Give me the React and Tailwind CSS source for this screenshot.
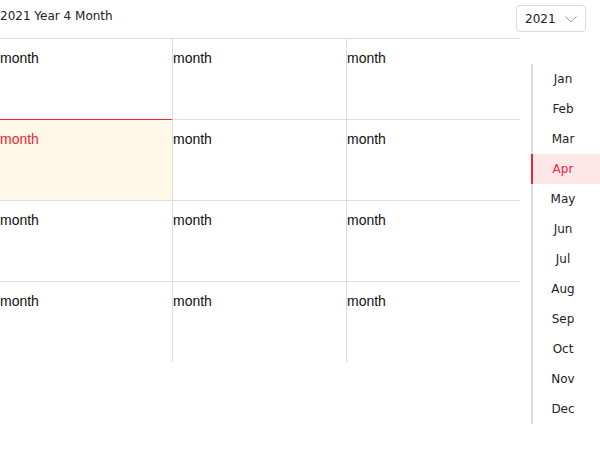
import React from 'react';

const MONTHS = ['Jan', 'Feb', 'Mar', 'Apr', 'May', 'Jun', 'Jul', 'Aug', 'Sep', 'Oct', 'Nov', 'Dec'];
const ACTIVE = 3;

function Chevron() {
  return (
    <svg width="14" height="12" viewBox="0 0 14 12" fill="none" className="ml-[8px]">
      <path d="M1.5 3.5 L7 9 L12.5 3.5" stroke="#9ca3af" strokeWidth="1" />
    </svg>
  );
}

export default function App() {
  const dv = { fontFamily: '"DejaVu Sans", sans-serif' };
  const lib = { fontFamily: '"Liberation Sans", Arial, sans-serif' };
  return (
    <div className="w-[600px] h-[460px] bg-white overflow-hidden" style={dv}>
      <div className="flex justify-between items-start h-[38px]">
        <div className="mt-[8px] text-[12px] leading-4 text-[#222]">2021 Year 4 Month</div>
        <div className="mt-[5px] mr-[14px] h-[27px] w-[70px] border border-[#d9d9d9] rounded-[4px] flex items-center pl-[8px] text-[12px] text-[#222]">
          2021
          <Chevron />
        </div>
      </div>
      <div className="flex items-start">
        <div className="w-[520px] grid grid-cols-[172px_174px_174px] auto-rows-[81px]" style={lib}>
          {Array.from({ length: 12 }).map((_, i) => {
            const active = i === ACTIVE;
            const col = i % 3;
            return (
              <div
                key={i}
                className={`h-[81px] border-t pt-[9px] text-[14px] leading-5 ${active ? 'border-t-[#f0233a] bg-[#fff7e8] text-[#f0233a]' : 'border-t-[#dcdcdc] text-[#111]'} ${col > 0 ? 'border-l border-l-[#dcdcdc]' : ''}`}
              >
                month
              </div>
            );
          })}
        </div>
        <div className="ml-[11px] mt-[26px] w-[69px] flex flex-col">
          {MONTHS.map((m, i) => (
            <div
              key={m}
              className={`h-[30px] border-l-2 flex items-center justify-center pr-[7px] text-[12px] ${i === ACTIVE ? 'border-l-[#f0233a] bg-[#ffe6e8] text-[#f0233a]' : 'border-l-[#dcdcdc] text-[#222]'}`}
            >
              {m}
            </div>
          ))}
        </div>
      </div>
    </div>
  );
}
